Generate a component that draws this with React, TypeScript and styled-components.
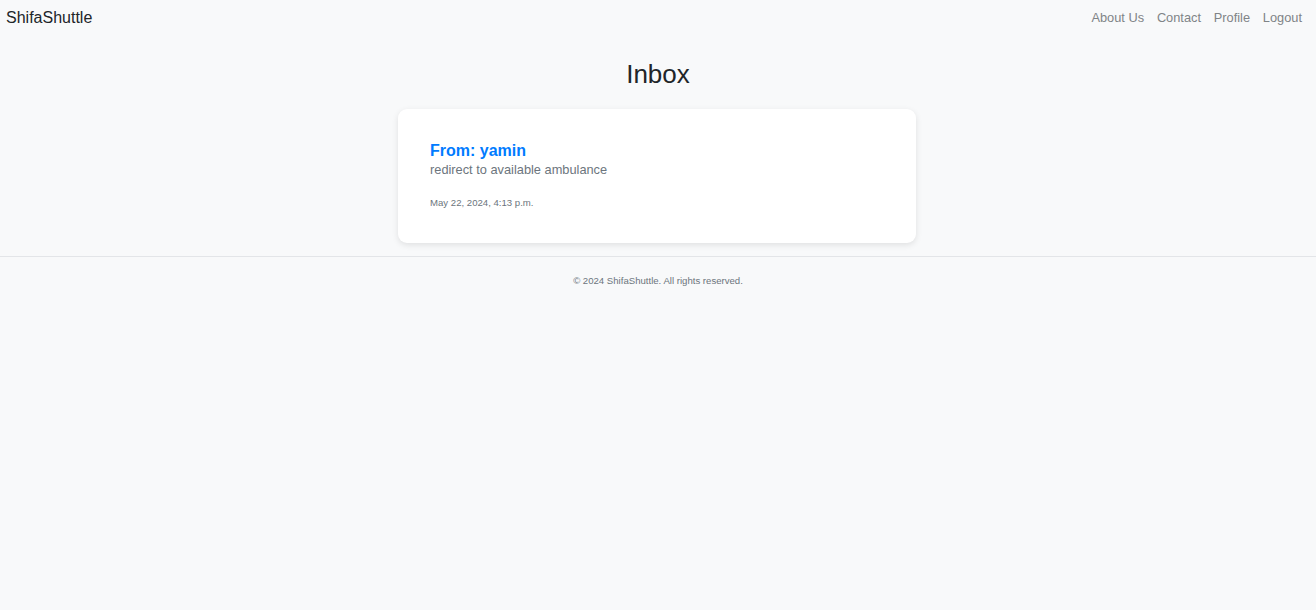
import styled, { createGlobalStyle } from 'styled-components';

const GlobalStyle = createGlobalStyle`
    body {
        margin: 0;
        background: #f8f9fa;
        font-family: 'Liberation Sans', Arial, sans-serif;
        color: #212529;
    }
`;

const App = () => {
    return (
        <>
            <GlobalStyle />
            <StyledNav>
                <StyledBrand>ShifaShuttle</StyledBrand>
                <StyledLinks>
                    <StyledLink>About Us</StyledLink>
                    <StyledLink>Contact</StyledLink>
                    <StyledLink>Profile</StyledLink>
                    <StyledLink>Logout</StyledLink>
                </StyledLinks>
            </StyledNav>
            <StyledMain>
                <StyledTitle>Inbox</StyledTitle>
                <StyledCard>
                    <StyledFrom>From: yamin</StyledFrom>
                    <StyledBody>redirect to available ambulance</StyledBody>
                    <StyledDate>May 22, 2024, 4:13 p.m.</StyledDate>
                </StyledCard>
            </StyledMain>
            <StyledFooter>© 2024 ShifaShuttle. All rights reserved.</StyledFooter>
        </>
    );
};

export default App;

const StyledNav = styled.nav`
    display: flex;
    justify-content: space-between;
    align-items: center;
    height: 35px;
    padding: 0 14px 0 6px;
`;

const StyledBrand = styled.div`
    font-size: 16px;
    color: #212529;
`;

const StyledLinks = styled.div`
    display: flex;
    gap: 12.8px;
`;

const StyledLink = styled.a`
    font-size: 12.8px;
    color: #808487;
    cursor: pointer;
`;

const StyledMain = styled.main`
    display: flex;
    flex-direction: column;
    align-items: center;
    padding-bottom: 13px;
    border-bottom: 1px solid #e3e5e8;
`;

const StyledTitle = styled.h1`
    margin: 24px 0 19px;
    font-size: 26px;
    font-weight: 400;
    color: #212529;
`;

const StyledCard = styled.div`
    width: 518px;
    height: 134px;
    box-sizing: border-box;
    padding: 32px 32px 0;
    margin-right: 2px;
    background: #fff;
    border-radius: 9px;
    box-shadow: 0 2px 6px rgba(0, 0, 0, 0.1);
`;

const StyledFrom = styled.div`
    font-size: 16px;
    font-weight: 700;
    color: #007bff;
    line-height: 19px;
`;

const StyledBody = styled.div`
    font-size: 12.8px;
    color: #6c757d;
    line-height: 20px;
`;

const StyledDate = styled.div`
    margin-top: 17px;
    font-size: 9.6px;
    color: #6c757d;
`;

const StyledFooter = styled.footer`
    text-align: center;
    padding-top: 18px;
    font-size: 9.6px;
    color: #6c757d;
`;
